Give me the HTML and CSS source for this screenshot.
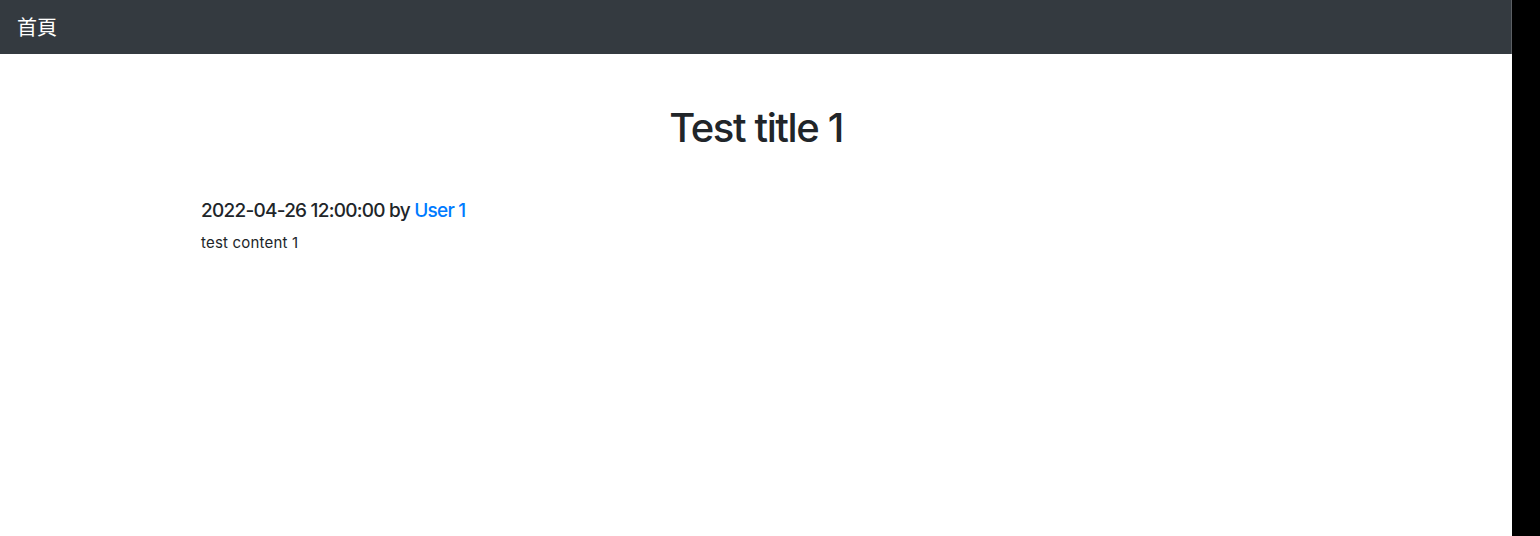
FILE: index.html
```html
<!DOCTYPE html>
<html lang="zh-Hant">
<head>
<meta charset="utf-8">
<title>Test title 1</title>
<link rel="stylesheet" href="styles.css">
</head>
<body>
<div class="page">
  <nav class="navbar">
    <a class="brand" href="#">首頁</a>
  </nav>
  <main class="container">
    <h1 class="title">Test title 1</h1>
    <h5 class="meta">2022-04-26 12:00:00 by <a href="#" class="author">User 1</a></h5>
    <p class="content">test content 1</p>
  </main>
</div>
</body>
</html>
```

FILE: styles.css
```css
html, body {
  margin: 0;
  padding: 0;
  height: 100%;
}
body {
  background: #000;
  font-family: Inter, "Noto Sans CJK TC", "Noto Sans", sans-serif;
  color: #212529;
  font-size: 15px;
  line-height: 1.5;
}
.page {
  width: 1512px;
  min-height: 100%;
  background: #fff;
}
.navbar {
  height: 54px;
  box-sizing: border-box;
  background: #343a40;
  border-right: 1px solid #5b5f64;
  display: flex;
  align-items: center;
  padding: 0 17px;
}
.brand {
  color: #fff;
  text-decoration: none;
  font-size: 20px;
  line-height: 30px;
  font-family: "Noto Sans CJK TC", sans-serif;
}
.container {
  width: 1110px;
  margin: 0 auto;
  padding: 0 15px;
}
.title {
  margin: 50px 0 0;
  text-align: center;
  font-size: 40px;
  font-weight: 500;
  line-height: 48px;
  letter-spacing: -1.4px;
}
.meta {
  margin: 47px 0 8px;
  font-size: 19px;
  font-weight: 500;
  line-height: 24px;
  letter-spacing: -0.75px;
}
.author {
  color: #007bff;
  text-decoration: none;
}
.content {
  margin: 0;
  line-height: 24px;
  letter-spacing: 0.2px;
}
```
